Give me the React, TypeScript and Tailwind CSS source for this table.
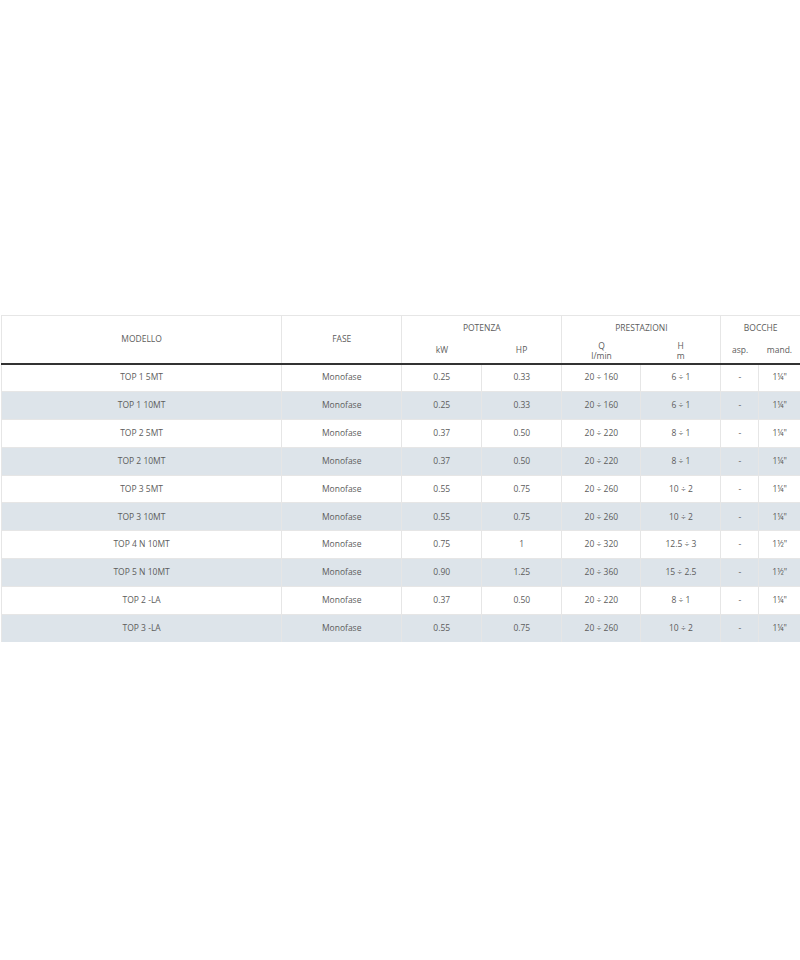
import React from 'react';

type Row = [string, string, string, string, string, string, string, string];

const rows: Row[] = [
  ['TOP 1 5MT', 'Monofase', '0.25', '0.33', '20 ÷ 160', '6 ÷ 1', '-', '1¼"'],
  ['TOP 1 10MT', 'Monofase', '0.25', '0.33', '20 ÷ 160', '6 ÷ 1', '-', '1¼"'],
  ['TOP 2 5MT', 'Monofase', '0.37', '0.50', '20 ÷ 220', '8 ÷ 1', '-', '1¼"'],
  ['TOP 2 10MT', 'Monofase', '0.37', '0.50', '20 ÷ 220', '8 ÷ 1', '-', '1¼"'],
  ['TOP 3 5MT', 'Monofase', '0.55', '0.75', '20 ÷ 260', '10 ÷ 2', '-', '1¼"'],
  ['TOP 3 10MT', 'Monofase', '0.55', '0.75', '20 ÷ 260', '10 ÷ 2', '-', '1¼"'],
  ['TOP 4 N 10MT', 'Monofase', '0.75', '1', '20 ÷ 320', '12.5 ÷ 3', '-', '1½"'],
  ['TOP 5 N 10MT', 'Monofase', '0.90', '1.25', '20 ÷ 360', '15 ÷ 2.5', '-', '1½"'],
  ['TOP 2 -LA', 'Monofase', '0.37', '0.50', '20 ÷ 220', '8 ÷ 1', '-', '1¼"'],
  ['TOP 3 -LA', 'Monofase', '0.55', '0.75', '20 ÷ 260', '10 ÷ 2', '-', '1¼"'],
];

const widths = ['w-[280px]', 'w-[120px]', 'w-[80px]', 'w-[80px]', 'w-[79px]', 'w-[80px]', 'w-[38px]', 'w-[41px]'];

const App: React.FC = () => {
  return (
    <div className="min-h-screen bg-white pt-[315px] pl-px font-['Open_Sans',sans-serif] text-[8.5px] text-[#5c5c5c]">
      <table className="w-[799px] table-fixed border-collapse border-t border-l border-[#e6e6e6]">
        <colgroup>
          {widths.map((w, i) => (
            <col key={i} className={w} />
          ))}
        </colgroup>
        <thead>
          <tr className="h-[23px]">
            <th rowSpan={2} className="border-r border-[#e6e6e6] font-normal">MODELLO</th>
            <th rowSpan={2} className="border-r border-[#e6e6e6] font-normal">FASE</th>
            <th colSpan={2} className="border-r border-[#e6e6e6] pt-[3px] font-normal">POTENZA</th>
            <th colSpan={2} className="border-r border-[#e6e6e6] pt-[3px] font-normal">PRESTAZIONI</th>
            <th colSpan={2} className="pt-[3px] font-normal">BOCCHE</th>
          </tr>
          <tr className="h-[25px] border-b-2 border-[#333]">
            <th className="font-normal">kW</th>
            <th className="border-r border-[#e6e6e6] font-normal">HP</th>
            <th className="font-normal leading-[10px]">Q<br />l/min</th>
            <th className="border-r border-[#e6e6e6] font-normal leading-[10px]">H<br />m</th>
            <th className="font-normal">asp.</th>
            <th className="font-normal">mand.</th>
          </tr>
        </thead>
        <tbody>
          {rows.map((r, i) => (
            <tr key={i} className={`h-[27.9px] ${i % 2 === 1 ? 'bg-[#dde4ea]' : 'bg-white'}`}>
              {r.map((c, j) => (
                <td
                  key={j}
                  className={`text-center ${j < 7 ? 'border-r border-[#e6e6e6]' : ''} ${i < rows.length - 1 ? 'border-b border-[#e6e6e6]' : ''}`}
                >
                  {c}
                </td>
              ))}
            </tr>
          ))}
        </tbody>
      </table>
    </div>
  );
};

export default App;
